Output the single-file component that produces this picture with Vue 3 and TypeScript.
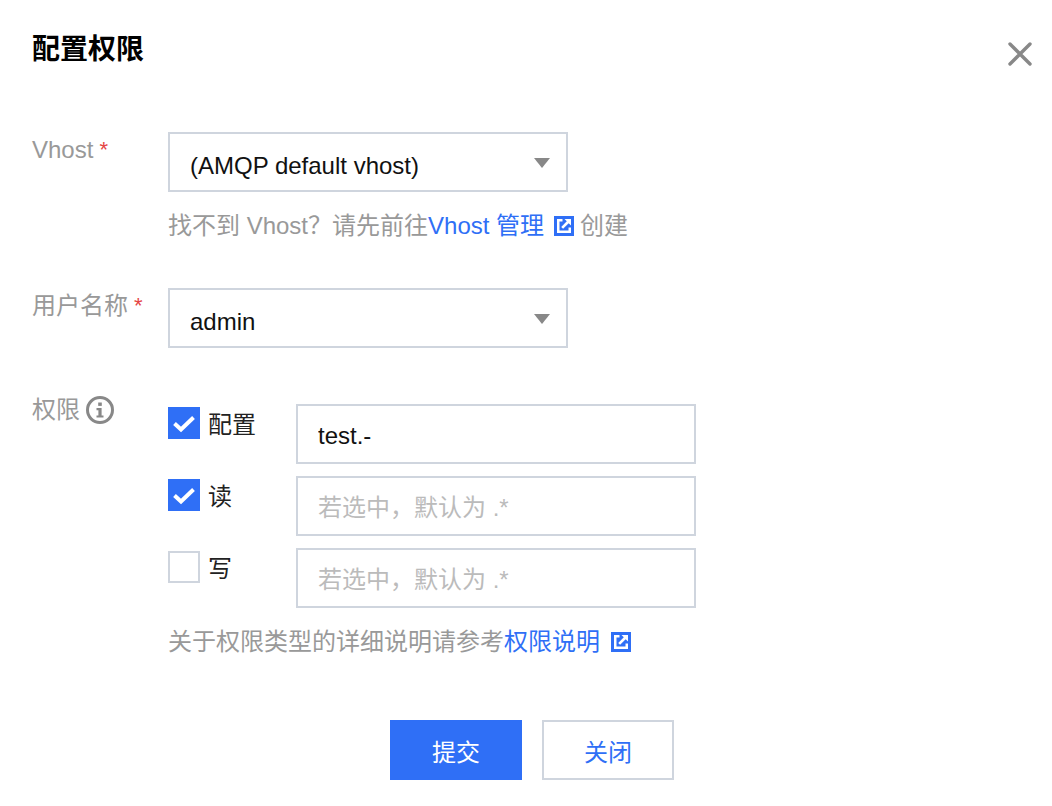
<script setup lang="ts">
interface Perm { label: string; checked: boolean; value: string }
const perms: Perm[] = [
  { label: '配置', checked: true, value: 'test.-' },
  { label: '读', checked: true, value: '' },
  { label: '写', checked: false, value: '' },
]
</script>

<template>
  <div class="dialog">
    <header class="head">
      <h3 class="title">配置权限</h3>
      <button class="close" aria-label="关闭">
        <svg width="24" height="24" viewBox="0 0 24 24"><path d="M2 2 22 22M22 2 2 22" stroke="#888" stroke-width="3.4" stroke-linecap="round" fill="none" /></svg>
      </button>
    </header>

    <div class="row first">
      <div class="label">Vhost <i class="req">*</i></div>
      <div class="ctl">
        <div class="select"><span>(AMQP default vhost)</span><b class="arrow"></b></div>
        <p class="hint">找不到 Vhost？请先前往<a class="link">Vhost 管理</a><svg class="ext gap" width="20" height="20" viewBox="0 0 20 20"><path fill-rule="evenodd" d="M0 0H20V20H0ZM3 3V17H17V11.5H14.5V14.5H5.5V5.5H8.5V3ZM10.5 3 12.8 5.3 7.2 10.9 9.1 12.8 14.7 7.2 17 9.5V3Z" fill="#2f6ff6" /></svg>创建</p>
      </div>
    </div>

    <div class="row second">
      <div class="label">用户名称 <i class="req">*</i></div>
      <div class="ctl">
        <div class="select"><span>admin</span><b class="arrow"></b></div>
      </div>
    </div>

    <div class="row third">
      <div class="label">权限
        <svg class="info" width="28" height="28" viewBox="0 0 28 28"><circle cx="14" cy="14" r="12.5" fill="none" stroke="#888" stroke-width="3" /><rect x="12.2" y="6.5" width="3.6" height="3.4" fill="#888" /><path d="M10.5 12H15.6V19.4H17.5V21.6H10.5V19.4H12.4V14.2H10.5Z" fill="#888" /></svg>
      </div>
      <div class="ctl perms">
        <div v-for="p in perms" :key="p.label" class="perm">
          <label class="check">
            <span class="box" :class="{ on: p.checked }">
              <svg v-if="p.checked" width="32" height="32" viewBox="0 0 32 32"><path d="M6.5 16.5 13 22.5 25.5 10.5" fill="none" stroke="#fff" stroke-width="4" /></svg>
            </span>
            <span class="check-text">{{ p.label }}</span>
          </label>
          <input class="input" :value="p.value" placeholder="若选中，默认为 .*" />
        </div>
        <p class="hint tight">关于权限类型的详细说明请参考<a class="link">权限说明</a><svg class="ext gap2" width="20" height="20" viewBox="0 0 20 20"><path fill-rule="evenodd" d="M0 0H20V20H0ZM3 3V17H17V11.5H14.5V14.5H5.5V5.5H8.5V3ZM10.5 3 12.8 5.3 7.2 10.9 9.1 12.8 14.7 7.2 17 9.5V3Z" fill="#2f6ff6" /></svg></p>
      </div>
    </div>

    <footer class="foot">
      <button class="btn primary">提交</button>
      <button class="btn">关闭</button>
    </footer>
  </div>
</template>

<style>
body { background: #fff; }
</style>

<style scoped>
.dialog {
  width: 1052px;
  height: 806px;
  box-sizing: border-box;
  padding: 30px 20px 0 32px;
  font-family: "Liberation Sans", "Noto Sans CJK SC", sans-serif;
  font-size: 24px;
  color: #000;
  overflow: hidden;
}
.head { display: flex; justify-content: space-between; align-items: flex-start; height: 40px; }
.title { margin: 0; font-size: 28px; line-height: 40px; font-weight: 700; }
.close { border: 0; background: none; padding: 0; margin-top: 12px; width: 24px; height: 24px; }
.row { display: flex; align-items: flex-start; }
.first { margin-top: 62px; }
.second { margin-top: 44px; }
.third { margin-top: 44px; }
.label { width: 136px; flex: none; line-height: 36px; color: #999; display: flex; align-items: center; gap: 6px; }
.req { color: #e54545; font-style: normal; font-size: 22px; margin-left: 0; }
.select {
  width: 400px; height: 60px; box-sizing: border-box; border: 2px solid #cfd5de;
  padding: 0 20px; position: relative; line-height: 64px; color: #111;
}
.arrow {
  position: absolute; right: 16px; top: 24px; width: 0; height: 0;
  border-left: 8px solid transparent; border-right: 8px solid transparent; border-top: 10px solid #888;
}
.hint { margin: 16px 0 0; line-height: 36px; color: #999; white-space: nowrap; display: flex; align-items: center; }
.link { color: #2f6ff6; }
.ext { flex: none; }
.gap { margin: 0 6px 0 10px; }
.gap2 { margin-left: 11px; }
.perms { padding-top: 12px; }
.perm { display: flex; align-items: flex-start; margin-bottom: 12px; }
.perm:last-of-type { margin-bottom: 0; }
.check { width: 128px; flex: none; display: flex; align-items: flex-start; padding-top: 3px; }
.box { width: 32px; height: 32px; box-sizing: border-box; border: 2px solid #cfd5de; display: block; flex: none; position: relative; }
.box.on { background: #2f6ff6; border: 0; }
.box svg { display: block; }
.check-text { margin-left: 8px; line-height: 36px; color: #222; }
.input {
  width: 400px; height: 60px; box-sizing: border-box; border: 2px solid #cfd5de; padding: 4px 20px 0;
  font: inherit; color: #111; outline: none; background: #fff; border-radius: 0; margin: 0;
}
.input::placeholder { color: #bbb; opacity: 1; }
.foot { display: flex; gap: 20px; margin: 60px 0 0 358px; }
.btn {
  width: 132px; height: 60px; box-sizing: border-box; border: 2px solid #cfd5de; background: #fff;
  color: #2f6ff6; font: inherit; padding: 0; border-radius: 0;
}
.btn.primary { background: #2f6ff6; border-color: #2f6ff6; color: #fff; }
</style>
